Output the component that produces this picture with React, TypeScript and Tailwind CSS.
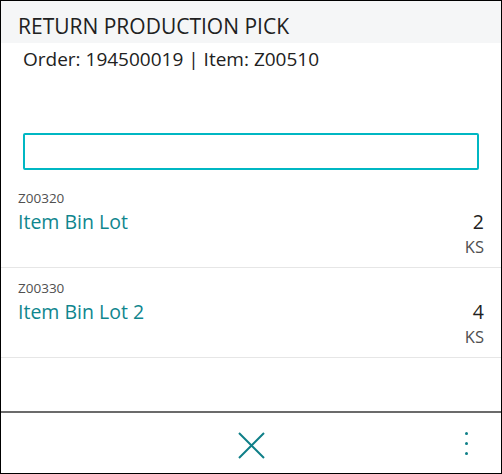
import React from "react";

const items = [
  { code: "Z00320", name: "Item Bin Lot", qty: "2", uom: "KS" },
  { code: "Z00330", name: "Item Bin Lot 2", qty: "4", uom: "KS" },
];

export default function App() {
  return (
    <div
      className="w-[502px] h-[474px] border border-black bg-white flex flex-col text-[#212121]"
      style={{ fontFamily: '"Open Sans", "Noto Sans", sans-serif' }}
    >
      <div className="h-[42px] bg-[#f5f6f7] flex items-center pl-[17px] text-[21px] leading-none pt-[8px]">
        RETURN PRODUCTION PICK
      </div>
      <div className="pl-[22px] pt-[3px] text-[19px] leading-[26px]">
        Order: 194500019 | Item: Z00510
      </div>
      <div className="px-[22px] pt-[61px]">
        <div className="h-[37px] border-2 border-[#00b7c3] rounded-[2px]" />
      </div>
      <div className="mt-[8px]">
        {items.map((it) => (
          <div key={it.code} className="border-b border-[#e6e6e6] px-[17px] pt-[12px] h-[90px]">
            <div className="text-[13.5px] leading-[16px] text-[#505050]">{it.code}</div>
            <div className="flex justify-between items-baseline mt-[4px]">
              <span className="text-[19.5px] leading-[24px] text-[#0f868e]">{it.name}</span>
              <span className="text-[19.5px] leading-[24px] text-[#212121]">{it.qty}</span>
            </div>
            <div className="text-right text-[16.5px] leading-[20px] mt-[3px] text-[#505050]">{it.uom}</div>
          </div>
        ))}
      </div>
      <div className="flex-1" />
      <div className="h-[62px] border-t-2 border-[#6b6b6b] relative flex items-center justify-center">
        <svg width="27" height="27" viewBox="0 0 27 27" className="mt-[4px]">
          <path d="M1 1 L26 26 M26 1 L1 26" stroke="#0f7f88" strokeWidth="2" fill="none" />
        </svg>
        <div className="absolute right-[33px] top-[19px] flex flex-col gap-[7px]">
          <span className="w-[3px] h-[3px] rounded-full bg-[#0f7f88]" />
          <span className="w-[3px] h-[3px] rounded-full bg-[#0f7f88]" />
          <span className="w-[3px] h-[3px] rounded-full bg-[#0f7f88]" />
        </div>
      </div>
    </div>
  );
}
